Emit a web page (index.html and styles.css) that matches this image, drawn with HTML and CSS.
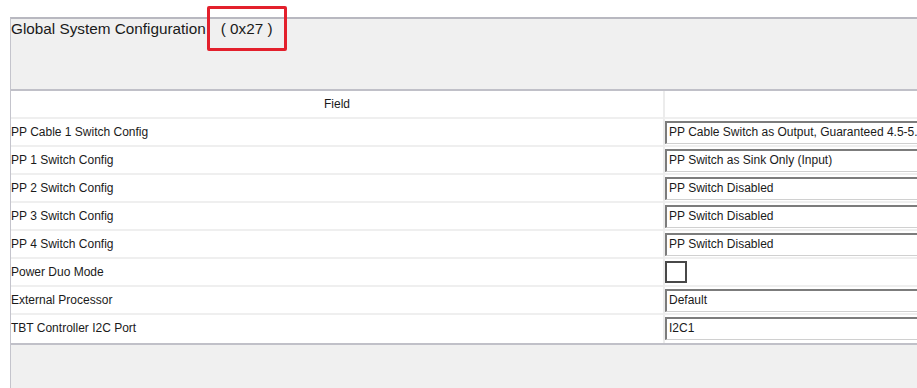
FILE: index.html
```html
<!DOCTYPE html>
<html lang="en">
<head>
    <meta charset="UTF-8">
    <meta name="viewport" content="width=device-width, initial-scale=1.0">
    <title>Global System Configuration</title>
    <link rel="stylesheet" href="styles.css">
</head>
<body>
    <div class="panel">
        <div class="title">
            Global System Configuration<span class="addr">( 0x27 )</span>
            <div class="mark"></div>
        </div>
        <div class="grid">
            <div class="cell head">Field</div>
            <div class="cell head value"></div>

            <div class="cell">PP Cable 1 Switch Config</div>
            <div class="cell value"><div class="box">PP Cable Switch as Output, Guaranteed 4.5-5.5V</div></div>

            <div class="cell">PP 1 Switch Config</div>
            <div class="cell value"><div class="box">PP Switch as Sink Only (Input)</div></div>

            <div class="cell">PP 2 Switch Config</div>
            <div class="cell value"><div class="box">PP Switch Disabled</div></div>

            <div class="cell">PP 3 Switch Config</div>
            <div class="cell value"><div class="box">PP Switch Disabled</div></div>

            <div class="cell">PP 4 Switch Config</div>
            <div class="cell value"><div class="box">PP Switch Disabled</div></div>

            <div class="cell">Power Duo Mode</div>
            <div class="cell value"><div class="check"></div></div>

            <div class="cell">External Processor</div>
            <div class="cell value"><div class="box">Default</div></div>

            <div class="cell">TBT Controller I2C Port</div>
            <div class="cell value"><div class="box">I2C1</div></div>
        </div>
    </div>
</body>
</html>
```

FILE: styles.css
```css
body {
    margin: 0;
    background-color: #ffffff;
    font-family: "Liberation Sans", Arial, sans-serif;
    color: #1a1a1a;
    overflow: hidden;
    width: 917px;
    height: 388px;
}
.panel {
    margin: 17px 0 0 10px;
    width: 906px;
    height: 369px;
    background-color: #f0f0f0;
    border-top: 2px solid #b8b8c0;
    border-left: 1px solid #c4c4cc;
}
.title {
    position: relative;
    height: 70px;
    box-sizing: border-box;
    padding: 1px 0 0 0;
    font-size: 15.3px;
    line-height: 17px;
}
.addr {
    margin-left: 15px;
}
.mark {
    position: absolute;
    left: 196px;
    top: -13px;
    width: 74px;
    height: 39px;
    border: 3px solid #e3202c;
    border-radius: 2px;
}
.grid {
    display: grid;
    grid-template-columns: 652px 254px;
    overflow: hidden;
    background-color: #ffffff;
    border-top: 2px solid #c0c0c8;
    border-bottom: 2px solid #c0c0c8;
}
.cell {
    height: 26px;
    border-bottom: 2px solid #efefef;
    font-size: 12px;
    line-height: 26px;
    white-space: nowrap;
    overflow: hidden;
}
.head {
    text-align: center;
}
.grid .cell:nth-last-child(-n+2) {
    border-bottom: none;
    height: 28px;
}
.value {
    border-left: 2px solid #ececec;
}
.box {
    margin-top: 2px;
    height: 23px;
    box-sizing: border-box;
    border-top: 2px solid #7c7c7c;
    border-left: 2px solid #7c7c7c;
    border-bottom: 1px solid #d0d0d0;
    padding-left: 2px;
    line-height: 19px;
    overflow: hidden;
}
.check {
    margin: 2px 0 0 0;
    width: 22px;
    height: 22px;
    box-sizing: border-box;
    border: 2px solid #484848;
    background-color: #ffffff;
}
```
